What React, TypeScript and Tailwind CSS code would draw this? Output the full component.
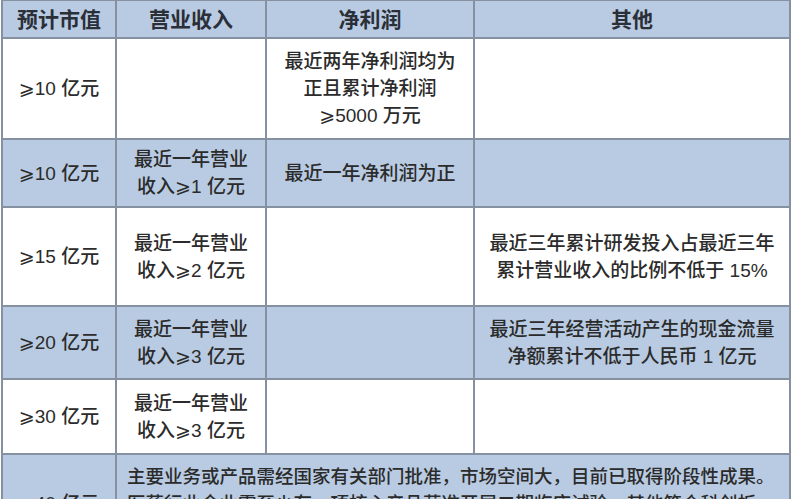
const font = { fontFamily: '"Liberation Sans", "Noto Sans CJK SC", "DejaVu Sans", sans-serif' };

const rows = [
  { cap: '⩾10 亿元', rev: '', profit: ['最近两年净利润均为', '正且累计净利润', '⩾5000 万元'], other: [], blue: false, h: 'h-[101px]' },
  { cap: '⩾10 亿元', rev: ['最近一年营业', '收入⩾1 亿元'], profit: ['最近一年净利润为正'], other: [], blue: true, h: 'h-[68px]' },
  { cap: '⩾15 亿元', rev: ['最近一年营业', '收入⩾2 亿元'], profit: [], other: ['最近三年累计研发投入占最近三年', '累计营业收入的比例不低于 15%'], blue: false, h: 'h-[99px]' },
  { cap: '⩾20 亿元', rev: ['最近一年营业', '收入⩾3 亿元'], profit: [], other: ['最近三年经营活动产生的现金流量', '净额累计不低于人民币 1 亿元'], blue: true, h: 'h-[73px]' },
  { cap: '⩾30 亿元', rev: ['最近一年营业', '收入⩾3 亿元'], profit: [], other: [], blue: false, h: 'h-[75px]' },
];

function Lines({ lines }: { lines: string[] | string }) {
  const list = Array.isArray(lines) ? lines : lines ? [lines] : [];
  return (
    <>
      {list.map((l, i) => (
        <div key={i}>{l}</div>
      ))}
    </>
  );
}

export default function App() {
  const cell = 'border-2 border-[#8590a0] text-center align-middle';
  return (
    <div className="w-[800px] h-[500px] overflow-hidden bg-white pl-[1px] -mt-[1px]" style={font}>
      <table className="table-fixed border-collapse text-[19px] leading-[27px] font-medium text-[#2b2b2b]">
        <colgroup>
          <col className="w-[114px]" />
          <col className="w-[150px]" />
          <col className="w-[208px]" />
          <col className="w-[316px]" />
        </colgroup>
        <thead>
          <tr className="h-[38px] bg-[#b9cbe2] text-[21px] text-[#2a2f38]">
            <th className={cell + ' font-bold'}>预计市值</th>
            <th className={cell + ' font-bold'}>营业收入</th>
            <th className={cell + ' font-bold'}>净利润</th>
            <th className={cell + ' font-bold'}>其他</th>
          </tr>
        </thead>
        <tbody>
          {rows.map((r, i) => (
            <tr key={i} className={r.h + ' ' + (r.blue ? 'bg-[#b9cbe2]' : 'bg-white')}>
              <td className={cell}>{r.cap}</td>
              <td className={cell}>
                <Lines lines={r.rev} />
              </td>
              <td className={cell}>
                <Lines lines={r.profit} />
              </td>
              <td className={cell}>
                <Lines lines={r.other} />
              </td>
            </tr>
          ))}
          {/* last row: medical / biotech standard */}
          <tr className="bg-[#b9cbe2]">
            <td className={cell}>⩾40 亿元</td>
            <td colSpan={3} className="border-2 border-[#8590a0] text-left align-middle pl-[10px] pr-0 py-[8px] text-[18.5px] whitespace-nowrap">
              <div>主要业务或产品需经国家有关部门批准，市场空间大，目前已取得阶段性成果。</div>
              <div>医药行业企业需至少有一项核心产品获准开展二期临床试验，其他符合科创板</div>
              <div>定位的企业需具备明显的技术优势并满足相应条件。</div>
            </td>
          </tr>
        </tbody>
      </table>
    </div>
  );
}
